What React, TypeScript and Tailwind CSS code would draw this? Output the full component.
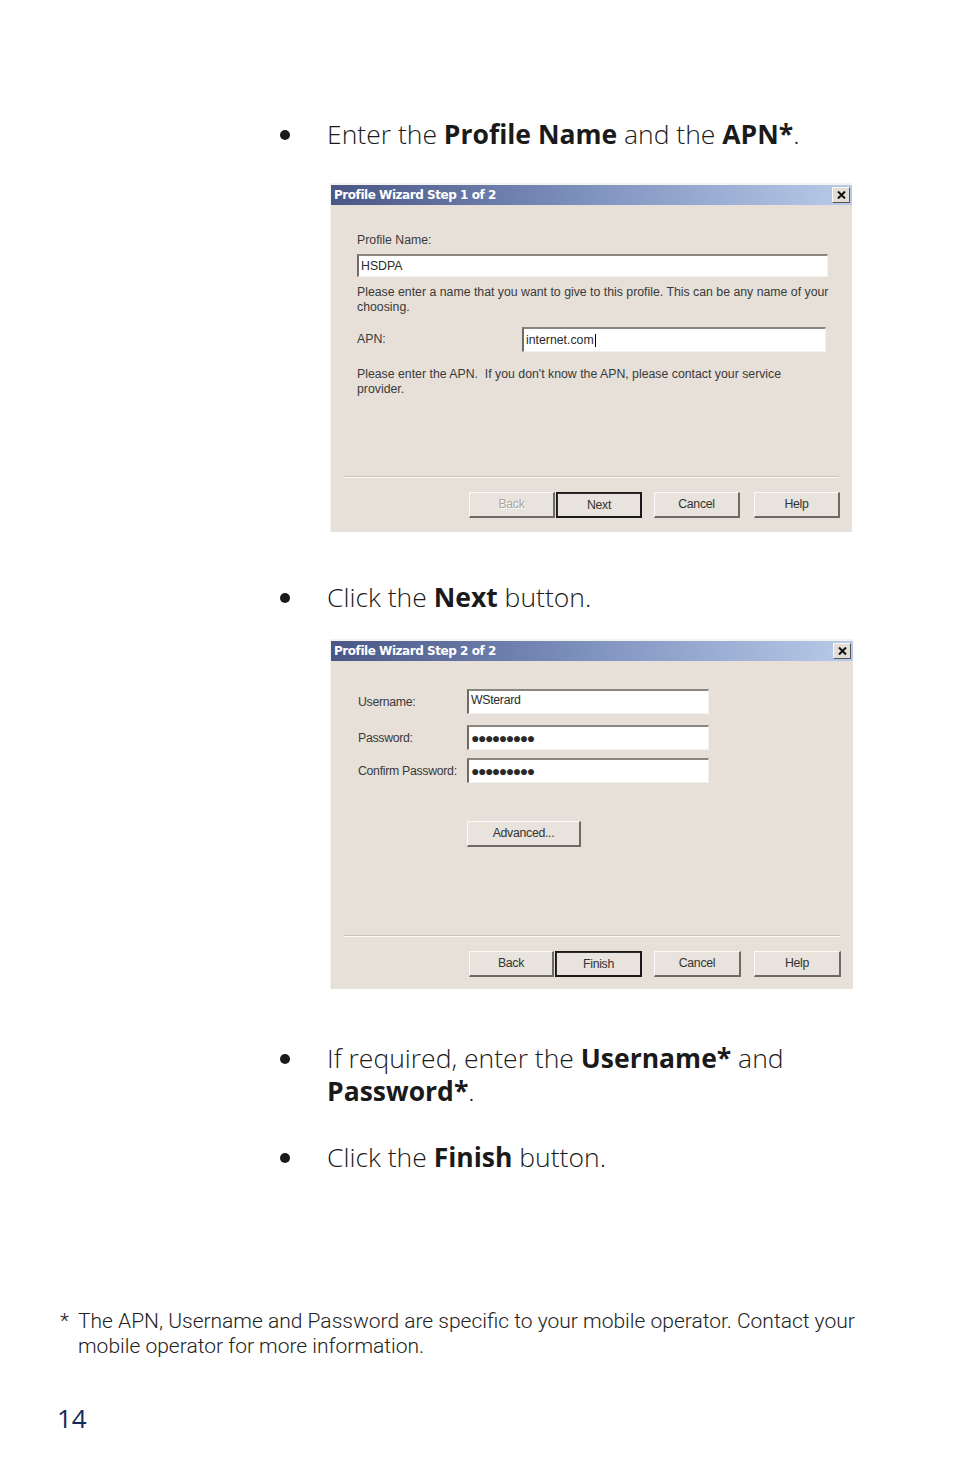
import React from "react";

const sunken =
  "border-t-2 border-l-2 border-b border-r border-t-[#8a8680] border-l-[#6e6a66] border-b-[#f4f2ef] border-r-[#f4f2ef] bg-white";

function Field({ className, children }: { className: string; children?: React.ReactNode }) {
  return (
    <div className={`${sunken} ${className} flex items-center pl-[2px] text-[12.3px] text-[#2a2a2a] leading-none`}>
      {children}
    </div>
  );
}

function Btn({
  label,
  def,
  disabled,
  className,
}: {
  label: string;
  def?: boolean;
  disabled?: boolean;
  className: string;
}) {
  return (
    <div
      className={`${className} flex items-center justify-center text-[12.3px] leading-none tracking-[-0.3px] bg-[#e8e3dc] ${
        def
          ? "border-2 border-t-[#2a2a2a] border-l-[#2a2a2a] border-b-[#1a1a1a] border-r-[#1a1a1a] outline outline-1 outline-[#1a1a1a] -outline-offset-[1px]"
          : "border-t border-l border-b-2 border-r-2 border-t-[#fbfaf8] border-l-[#fbfaf8] border-b-[#6d6964] border-r-[#6d6964]"
      } ${disabled ? "text-[#aaa59e] [text-shadow:1px_1px_0_#ffffff]" : "text-[#333]"}`}
    >
      {label}
    </div>
  );
}

function TitleBar({ title }: { title: string }) {
  return (
    <div className="h-[20px] bg-gradient-to-r from-[#4a5786] via-[#7f93bf] to-[#b9cbe9] flex items-center justify-between pl-[3px] pr-[2px]">
      <span
        className="text-white font-bold leading-none"
        style={{ fontFamily: "Verdana, 'DejaVu Sans', sans-serif", fontSize: 12, letterSpacing: "-0.45px" }}
      >
        {title}
      </span>
      <div className="w-[18px] h-[16px] bg-[#e2ddd6] border-t border-l border-b border-r border-t-[#fbfaf8] border-l-[#fbfaf8] border-b-[#555] border-r-[#555] flex items-center justify-center">
        <svg width="9" height="8" viewBox="0 0 9 8">
          <path d="M1 0.5 L8 7.5 M8 0.5 L1 7.5" stroke="#111" strokeWidth="2" />
        </svg>
      </div>
    </div>
  );
}

function Bullet({ children, className }: { children: React.ReactNode; className?: string }) {
  return (
    <div className={`flex ${className ?? ""}`}>
      <div className="w-[47px] pl-[280px] box-content shrink-0 flex items-start">
        <div className="w-[10px] h-[10px] rounded-full bg-[#1a1a1a] mt-[12px]" />
      </div>
      <div className="text-[26.5px] leading-[33px] text-[#1a1a1a] font-light">{children}</div>
    </div>
  );
}

const dlgFont = { fontFamily: "'Liberation Sans', Arial, sans-serif" };

export default function App() {
  return (
    <div
      className="w-[954px] h-[1474px] bg-white flex flex-col"
      style={{ fontFamily: "'Open Sans', 'Noto Sans', sans-serif" }}
    >
      <Bullet className="mt-[118px]">
        Enter the <b className="font-bold">Profile Name</b> and the <b className="font-bold">APN*</b>.
      </Bullet>

      {/* Dialog 1 */}
      <div
        className="ml-[330px] mt-[32px] w-[522px] h-[349px] bg-[#e6e0d9] border-t-2 border-l border-[#f6f3ef] flex flex-col"
        style={dlgFont}
      >
        <TitleBar title="Profile Wizard Step 1 of 2" />
        <div className="pl-[26px] pr-[20px] flex flex-col text-[12.3px] text-[#3a3a3a]">
          <div className="mt-[28px] leading-[15px]">Profile Name:</div>
          <Field className="mt-[6px] h-[23px] w-[471px]">HSDPA</Field>
          <div className="mt-[8px] leading-[15px]">
            Please enter a name that you want to give to this profile. This can be any name of your choosing.
          </div>
          <div className="mt-[12px] flex items-center">
            <div className="w-[165px]">APN:</div>
            <Field className="h-[25px] w-[304px]">
              internet.com<span className="inline-block w-[1px] h-[13px] bg-black ml-[1px]" />
            </Field>
          </div>
          <div className="mt-[15px] leading-[15px] pr-[40px]">
            Please enter the APN.&nbsp; If you don't know the APN, please contact your service provider.
          </div>
        </div>
        <div className="mt-auto mx-[13px] border-t border-t-[#c9c3bb] border-b border-b-[#fbfaf8]" />
        <div className="flex justify-end pr-[12px] mt-[14px] mb-[14px]">
          <Btn label="Back" disabled className="w-[86px] h-[26px]" />
          <Btn label="Next" def className="w-[86px] h-[26px] ml-[1px]" />
          <Btn label="Cancel" className="w-[86px] h-[26px] ml-[12px]" />
          <Btn label="Help" className="w-[86px] h-[26px] ml-[14px]" />
        </div>
      </div>

      <Bullet className="mt-[49px]">
        Click the <b className="font-bold">Next</b> button.
      </Bullet>

      {/* Dialog 2 */}
      <div
        className="ml-[330px] mt-[25px] w-[523px] h-[350px] bg-[#e6e0d9] border-t-2 border-l border-[#f6f3ef] flex flex-col"
        style={dlgFont}
      >
        <TitleBar title="Profile Wizard Step 2 of 2" />
        <div className="pl-[27px] flex flex-col text-[12.3px] text-[#3a3a3a] tracking-[-0.3px] mt-[28px]">
          <div className="flex items-center">
            <div className="w-[109px] pt-[2px]">Username:</div>
            <Field className="h-[25px] w-[242px] items-start pt-[3px]">WSterard</Field>
          </div>
          <div className="flex items-center mt-[11px]">
            <div className="w-[109px] pt-[2px]">Password:</div>
            <Field className="h-[25px] w-[242px] text-[14px] tracking-[-1.5px] font-bold">●●●●●●●●●</Field>
          </div>
          <div className="flex items-center mt-[8px]">
            <div className="w-[109px] pt-[2px]">Confirm Password:</div>
            <Field className="h-[25px] w-[242px] text-[14px] tracking-[-1.5px] font-bold">●●●●●●●●●</Field>
          </div>
          <div className="pl-[109px] mt-[38px]">
            <Btn label="Advanced..." className="w-[114px] h-[26px]" />
          </div>
        </div>
        <div className="mt-auto mx-[13px] border-t border-t-[#c9c3bb] border-b border-b-[#fbfaf8]" />
        <div className="flex justify-end pr-[12px] mt-[14px] mb-[12px]">
          <Btn label="Back" className="w-[85px] h-[26px]" />
          <Btn label="Finish" def className="w-[87px] h-[26px] ml-[1px]" />
          <Btn label="Cancel" className="w-[87px] h-[26px] ml-[12px]" />
          <Btn label="Help" className="w-[87px] h-[26px] ml-[13px]" />
        </div>
      </div>

      <Bullet className="mt-[53px]">
        If required, enter the <b className="font-bold">Username*</b> and
        <br />
        <b className="font-bold">Password*</b>.
      </Bullet>

      <Bullet className="mt-[33px]">
        Click the <b className="font-bold">Finish</b> button.
      </Bullet>

      <div
        className="mt-[135px] pl-[60px] flex text-[21px] leading-[25px] text-[#222]"
        style={{ fontFamily: "Roboto, 'Noto Sans', sans-serif", fontWeight: 300 }}
      >
        <span className="w-[18px] shrink-0">*</span>
        <span className="w-[785px]">
          The APN, Username and Password are specific to your mobile operator. Contact your mobile operator for
          more information.
        </span>
      </div>

      <div className="mt-[46px] pl-[57px] text-[26px] leading-none text-[#13295a]">14</div>
    </div>
  );
}
